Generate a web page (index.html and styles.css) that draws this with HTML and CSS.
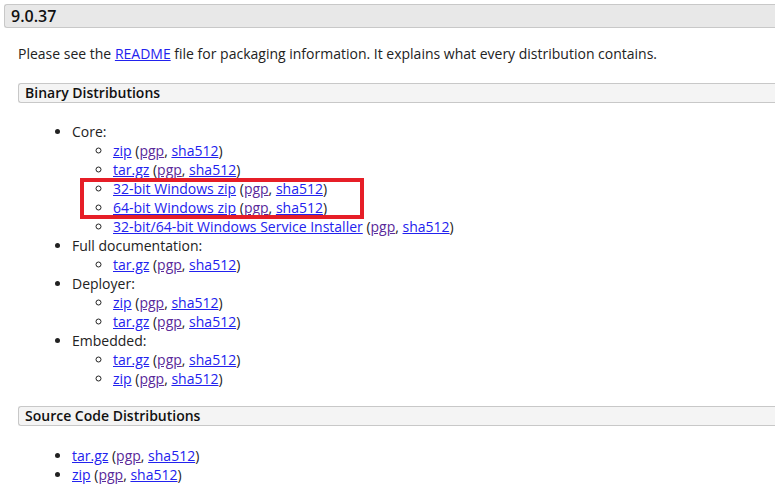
FILE: index.html
```html
<!DOCTYPE html>
<html lang="en">

<head>
    <meta charset="UTF-8">
    <title>Apache Tomcat 9 Downloads</title>
    <link rel="stylesheet" href="styles.css">
</head>

<body>

    <h3 class="release-title">9.0.37</h3>

    <div class="release-body">
        <p>Please see the <a href="#">README</a> file for packaging information. It explains what every distribution contains.</p>

        <h4 class="dist-title">Binary Distributions</h4>
        <ul class="dist-list">
            <li>Core:
                <ul class="sub-list">
                    <li><a href="#">zip</a> (<a class="sig" href="#">pgp</a>, <a href="#">sha512</a>)</li>
                    <li><a href="#">tar.gz</a> (<a class="sig" href="#">pgp</a>, <a href="#">sha512</a>)</li>
                    <li><a href="#">32-bit Windows zip</a> (<a class="sig" href="#">pgp</a>, <a href="#">sha512</a>)</li>
                    <li><a href="#">64-bit Windows zip</a> (<a class="sig" href="#">pgp</a>, <a href="#">sha512</a>)</li>
                    <li><a href="#">32-bit/64-bit Windows Service Installer</a> (<a class="sig" href="#">pgp</a>, <a href="#">sha512</a>)</li>
                    <li class="highlight"></li>
                </ul>
            </li>
            <li>Full documentation:
                <ul class="sub-list">
                    <li><a href="#">tar.gz</a> (<a class="sig" href="#">pgp</a>, <a href="#">sha512</a>)</li>
                </ul>
            </li>
            <li>Deployer:
                <ul class="sub-list">
                    <li><a href="#">zip</a> (<a class="sig" href="#">pgp</a>, <a href="#">sha512</a>)</li>
                    <li><a href="#">tar.gz</a> (<a class="sig" href="#">pgp</a>, <a href="#">sha512</a>)</li>
                </ul>
            </li>
            <li>Embedded:
                <ul class="sub-list">
                    <li><a href="#">tar.gz</a> (<a class="sig" href="#">pgp</a>, <a href="#">sha512</a>)</li>
                    <li><a href="#">zip</a> (<a class="sig" href="#">pgp</a>, <a href="#">sha512</a>)</li>
                </ul>
            </li>
        </ul>

        <h4 class="dist-title">Source Code Distributions</h4>
        <ul class="dist-list">
            <li><a href="#">tar.gz</a> (<a class="sig" href="#">pgp</a>, <a href="#">sha512</a>)</li>
            <li><a href="#">zip</a> (<a class="sig" href="#">pgp</a>, <a href="#">sha512</a>)</li>
        </ul>
    </div>

</body>

</html>
```

FILE: styles.css
```css
body {
    font-family: "Open Sans", sans-serif;
    font-size: 14px;
    line-height: 19px;
    color: #222;
    background-color: white;
    margin: 0;
    padding: 4px 0 0 4px;
    overflow: hidden;
}

a {
    color: #2222ee;
    text-decoration: underline;
}

a.sig {
    color: #5a2a9a;
}

.release-title {
    margin: 0;
    height: 24px;
    box-sizing: border-box;
    padding-left: 6px;
    font-size: 16px;
    font-weight: 600;
    line-height: 22px;
    color: #111;
    background-color: #e8e8e8;
    border: 1px solid #c8c8c8;
    border-right: none;
    border-radius: 3px 0 0 3px;
}

.release-body {
    padding-left: 14px;
}

.release-body p {
    margin: 16px 0 20px 0;
}

.dist-title {
    margin: 0;
    height: 20px;
    box-sizing: border-box;
    padding-left: 6px;
    font-size: 14px;
    font-weight: 600;
    line-height: 18px;
    color: #111;
    background-color: #f4f4f4;
    border: 1px solid #c8c8c8;
    border-right: none;
    border-radius: 3px 0 0 3px;
}

.dist-list {
    margin: 19px 0 18px 0;
    padding-left: 54px;
    list-style: disc;
}

.dist-list + .dist-title + .dist-list {
    margin-top: 20px;
}

.sub-list {
    position: relative;
    margin: 0;
    padding-left: 41px;
    list-style: circle;
}

/* red annotation around the two windows zips */
.highlight {
    position: absolute;
    left: 8px;
    top: 37px;
    width: 284px;
    height: 41px;
    box-sizing: border-box;
    border: 4px solid #e61e27;
    list-style: none;
}
```
